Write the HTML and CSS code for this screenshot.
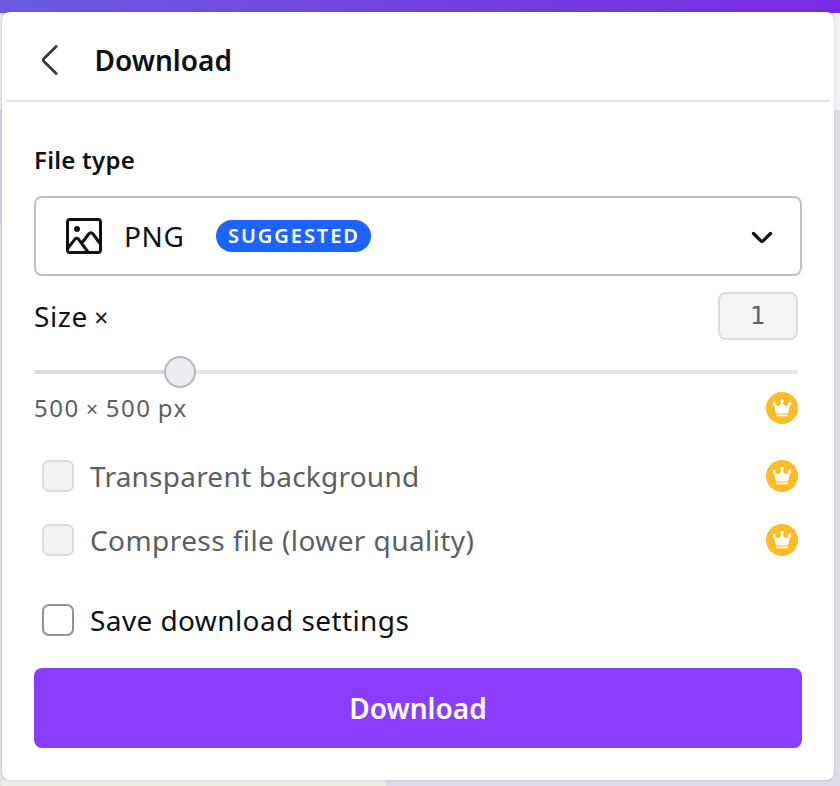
FILE: index.html
```html
<!DOCTYPE html>
<html lang="en">
<head>
<meta charset="utf-8">
<title>Download</title>
<link rel="stylesheet" href="styles.css">
</head>
<body>
<svg class="defs" width="0" height="0" aria-hidden="true">
  <symbol id="crown" viewBox="0 0 32 32">
    <circle cx="16" cy="16" r="16" fill="#fdbc25"/>
    <path fill="#fff" d="M11.500 21.400Q9.800 21.400 9.400 19.500L8.200 13.500A1.800 1.800 0 1 1 10 12.400C10.400 13.700 11.300 14.300 12.300 14.100 13.800 13.700 14.900 12.200 15.200 10.600A1.800 1.800 0 1 1 16.800 10.600C17.100 12.200 18.200 13.700 19.700 14.100 20.700 14.300 21.600 13.700 22 12.400A1.800 1.800 0 1 1 23.800 13.500L22.600 19.500Q22.200 21.400 20.500 21.400Z"/>
    <path fill="#fff" d="M10 22.600h12v1.700H10z"/>
  </symbol>
</svg>
<main class="panel">
  <header class="header">
    <svg class="back" width="20" height="32" viewBox="0 0 20 32"><path d="M16.200 2.400 4 14.600a2 2 0 0 0 0 2.800L16.200 29.600"/></svg>
    <h1 class="title">Download</h1>
  </header>
  <section class="body">
    <h2 class="label">File type</h2>
    <div class="select">
      <svg class="picture" width="36" height="36" viewBox="0 0 36 36">
        <rect x="1.5" y="1.5" width="33" height="33" rx="2.5"/>
        <circle cx="11" cy="11" r="3"/>
        <path d="m2 30 6.800-8.700q1.900-2 3.800 0L22 34M15.500 25.500l7.200-9.500q2.200-2.500 4.400 0L34 25.500"/>
      </svg>
      <span class="format">PNG</span>
      <span class="badge">SUGGESTED</span>
      <svg class="chevron" width="22" height="14" viewBox="0 0 22 14"><path d="m2.500 2.500 7.400 7.400q1.100 1.100 2.200 0l7.400-7.400"/></svg>
    </div>
    <div class="size-row">
      <span class="size-label">Size <span class="times">×</span></span>
      <span class="size-value">1</span>
    </div>
    <div class="slider"><span class="fill"></span><span class="thumb"></span><span class="rest"></span></div>
    <div class="dims"><span class="dims-text">500 <span class="times">×</span> 500 px</span><svg class="crown"><use href="#crown"/></svg></div>
    <div class="option disabled first"><span class="box"></span><span class="text transparent">Transparent background</span><svg class="crown"><use href="#crown"/></svg></div>
    <div class="option disabled"><span class="box"></span><span class="text compress">Compress file (lower quality)</span><svg class="crown"><use href="#crown"/></svg></div>
    <div class="option save"><span class="box"></span><span class="text savetext">Save download settings</span></div>
    <button class="download">Download</button>
  </section>
</main>
</body>
</html>
```
FILE: styles.css
```css
* { box-sizing: border-box; }
body {
  margin: 0;
  width: 840px;
  height: 786px;
  padding: 12px 6px 6px 2px;
  overflow: hidden;
  font-family: "Noto Sans", "Open Sans", sans-serif;
  color: #0d1216;
  background:
    linear-gradient(90deg, #6a5ae0, #7a2be2) 0 0 / 840px 13px no-repeat,
    linear-gradient(#e9e9ef, #e9e9ef) 0 13px / 2px 97px no-repeat,
    linear-gradient(#d0d2e2, #d0d2e2) 0 110px / 2px 113px no-repeat,
    linear-gradient(#e2e3dc, #e2e3dc) 0 223px / 2px 563px no-repeat,
    linear-gradient(#f2f2f4, #f2f2f4) 834px 13px / 6px 97px no-repeat,
    linear-gradient(#ecede4, #ecede4) 0 780px / 386px 6px no-repeat,
    #dcdce8;
}
.defs { position: absolute; }
.panel {
  width: 832px;
  height: 768px;
  background: #fff;
  border-radius: 8px;
  box-shadow: 0 0 2px 1px rgba(60, 70, 100, .12);
}
.header {
  height: 90px;
  margin: 0 4px;
  padding: 8px 0 0 34px;
  display: flex;
  align-items: center;
  border-bottom: 2px solid #e4e4e9;
}
.back { margin-right: 34.5px; fill: none; stroke: #36393f; stroke-width: 2.8; stroke-linecap: round; }
.title { margin: 0; font-size: 28px; line-height: 40px; font-weight: 600; }
.body { padding: 42px 32px 0; }
.label { margin: 0 0 20px; font-size: 24px; line-height: 32px; font-weight: 600; letter-spacing: .25px; }
.select {
  height: 80px;
  padding: 0 27px 0 30px;
  display: flex;
  align-items: center;
  border: 2px solid #bfc3c8;
  border-radius: 8px;
}
.picture { fill: none; stroke: #0d1216; stroke-width: 3; stroke-linejoin: round; }
.picture circle { fill: #0d1216; stroke: none; }
.format { width: 92px; margin-left: 22px; font-size: 28px; line-height: 36px; letter-spacing: .6px; }
.badge {
  width: 155px;
  height: 32px;
  border-radius: 16px;
  background: #1c63ff;
  color: #fff;
  font-size: 20px;
  line-height: 32px;
  font-weight: 600;
  letter-spacing: 1.95px;
  padding-left: 12px;
}
.chevron { margin: 4px 0 0 auto; fill: none; stroke: #0d1216; stroke-width: 3.2; stroke-linecap: round; }
.size-row { height: 48px; margin: 16px 4px 0 0; display: flex; align-items: center; justify-content: space-between; }
.size-label { margin-top: 2px; font-size: 28px; line-height: 40px; letter-spacing: .6px; word-spacing: -1.5px; }
.times { font-size: .88em; }
.size-value {
  width: 80px;
  height: 48px;
  border: 2px solid #d9dce0;
  border-radius: 8px;
  background: #f4f4f6;
  color: #5b5f63;
  font: 24px/44px "DejaVu Sans", sans-serif;
  text-align: center;
}
.slider { height: 32px; margin: 16px 4px 0 0; display: flex; align-items: center; }
.fill { width: 130px; height: 4px; border-radius: 2px 0 0 2px; background: #d7dade; }
.thumb { width: 32px; height: 32px; border: 2px solid #b5b7bd; border-radius: 50%; background: #ebebf0; }
.rest { flex: 1; height: 4px; border-radius: 0 2px 2px 0; background: #e4e4e9; }
.dims { height: 32px; margin: 4px 4px 0 0; display: flex; align-items: center; justify-content: space-between; color: #5b5f63; font-size: 24px; line-height: 32px; letter-spacing: 1.5px; word-spacing: -1.5px; }
.crown { width: 32px; height: 32px; margin-left: auto; flex: none; }
.option { height: 32px; margin: 32px 4px 0 8px; display: flex; align-items: center; font-size: 28px; line-height: 32px; }
.option.first { margin-top: 36px; }
.option.save { margin-top: 48px; }
.disabled { color: #5b5f63; }
.box { width: 32px; height: 32px; margin-right: 16px; flex: none; border: 2px solid #929397; border-radius: 7px; }
.disabled .box { border-color: #d9dce0; background: #f2f2f3; }
.text { white-space: nowrap; }
.transparent { letter-spacing: .23px; }
.compress { letter-spacing: .42px; }
.savetext { letter-spacing: .41px; }
.download {
  display: block;
  width: 768px;
  height: 80px;
  margin-top: 32px;
  padding: 0 0 0;
  border: 0;
  border-radius: 8px;
  background: #8b3dff;
  color: #fff;
  font: 600 28px/80px "Noto Sans", sans-serif;
}
```
